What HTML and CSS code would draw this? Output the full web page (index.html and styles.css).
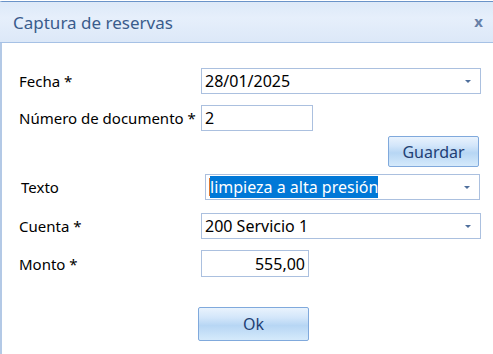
FILE: index.html
```html
<html>
  <head>
    <meta charset="UTF-8">
    <title>Captura de reservas</title>
    <link rel="stylesheet" href="styles.css">
  </head>
  <body>
    <div class="window">
      <div class="title-bar">
        <span class="title">Captura de reservas</span>
        <span class="close">x</span>
      </div>
      <div class="form">
        <div class="row row-fecha">
          <div class="label">Fecha *</div>
          <div class="field combo wide">
            <span class="value">28/01/2025</span>
            <span class="arrow"></span>
          </div>
        </div>
        <div class="row row-numero">
          <div class="label">Número de documento *</div>
          <div class="field short"><span class="value">2</span></div>
        </div>
        <div class="row row-guardar">
          <button class="btn btn-guardar">Guardar</button>
        </div>
        <div class="row row-texto">
          <div class="label label-texto">Texto</div>
          <div class="field combo texto">
            <span class="value"><span class="caret"></span><span class="selected">limpieza a alta presión</span></span>
            <span class="arrow"></span>
          </div>
        </div>
        <div class="row row-cuenta">
          <div class="label">Cuenta *</div>
          <div class="field combo wide">
            <span class="value">200 Servicio 1</span>
            <span class="arrow"></span>
          </div>
        </div>
        <div class="row row-monto">
          <div class="label">Monto *</div>
          <div class="field short monto"><span class="value">555,00</span></div>
        </div>
        <div class="row row-ok">
          <button class="btn btn-ok">Ok</button>
        </div>
      </div>
    </div>
  </body>
</html>
```

FILE: styles.css
```css
body {
  margin: 0;
  padding: 0;
  background-color: #ffffff;
  font-family: "Noto Sans", "Open Sans", sans-serif;
  font-size: 15px;
  color: #000000;
}
.window {
  margin-top: 1px;
  height: 353px;
  border-top: 1px solid #6a93c8;
  border-left: 2px solid #b3c9e6;
  box-sizing: border-box;
}
.title-bar {
  height: 41px;
  margin-left: -2px;
  background: linear-gradient(to bottom, #dde9f8, #e6effb 40%, #dce8f8);
  border-bottom: 1px solid #a6c1e5;
  display: flex;
  align-items: center;
  justify-content: space-between;
  padding: 0 10px 0 13px;
  box-sizing: border-box;
}
.title {
  font-size: 17px;
  color: #3a5c8c;
}
.close {
  font-size: 15px;
  font-weight: bold;
  color: #6780a8;
  margin-top: -2px;
}
.form {
  padding: 25px 0 0 17px;
}
.row {
  display: flex;
  align-items: center;
}
.label {
  width: 182px;
}
.field {
  height: 26px;
  border: 1px solid #abc0df;
  box-sizing: border-box;
  display: flex;
  align-items: center;
  padding: 0 3px;
  font-size: 16px;
}
.wide {
  width: 280px;
}
.short {
  width: 112px;
}
.combo {
  justify-content: space-between;
}
.arrow {
  width: 0;
  height: 0;
  border-left: 3px solid transparent;
  border-right: 3px solid transparent;
  border-top: 3px solid #4f6f9c;
  margin-right: 6px;
}
.row-numero {
  margin-top: 11px;
}
.row-guardar {
  margin-top: 5px;
  justify-content: flex-end;
  width: 460px;
}
.btn {
  font-family: "Noto Sans", "Open Sans", sans-serif;
  font-size: 16px;
  color: #1f3f74;
  border: 1px solid #80a9dc;
  border-radius: 2px;
  background: linear-gradient(to bottom, #e9f3fd, #d3e6fa 30%, #b7d6f4 55%, #d5eafb);
  padding: 0;
}
.btn-guardar {
  width: 91px;
  height: 31px;
}
.row-texto {
  margin-top: 7px;
}
.label-texto {
  padding-left: 2px;
  width: 184px;
}
.texto {
  width: 275px;
}
.caret {
  display: inline-block;
  width: 1px;
  height: 18px;
  background-color: #e0782f;
  vertical-align: middle;
}
.selected {
  background-color: #0078d7;
  color: #ffffff;
  vertical-align: middle;
}
.row-cuenta {
  margin-top: 13px;
}
.row-monto {
  margin-top: 11px;
}
.monto {
  width: 108px;
  height: 27px;
  justify-content: flex-end;
}
.row-ok {
  margin-top: 30px;
  padding-left: 179px;
}
.btn-ok {
  width: 111px;
  height: 34px;
}
```
